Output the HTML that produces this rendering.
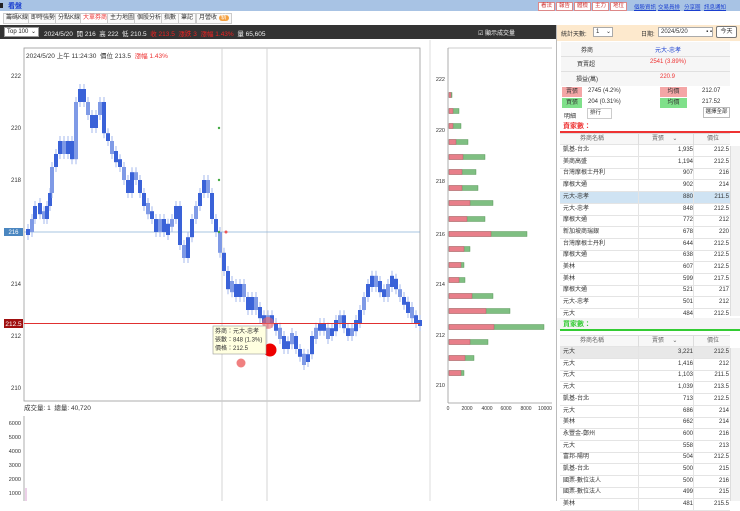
<!DOCTYPE html>
<html><head><meta charset="utf-8">
<style>
*{margin:0;padding:0;box-sizing:border-box}
body{width:740px;height:501px;overflow:hidden;background:#fff;font-family:"Liberation Sans","Noto Sans CJK TC",sans-serif;font-size:6.5px;color:#333;position:relative}
.a{position:absolute;white-space:nowrap}
.tab{position:absolute;top:13px;height:11px;border:1px solid #ccc;background:#fafafa;font-size:6px;line-height:9px;padding:0 2px;color:#333}
.btn{position:absolute;top:2px;height:9px;background:#fff;border:1px solid #d88;color:#c33;font-size:5.5px;line-height:7px;padding:0 2px}
.lnk{color:#1a3fd0;text-decoration:underline;font-size:5.5px}
.row{position:absolute;left:560px;width:170px;height:12px;border-bottom:1px solid #e4e4e4;font-size:6px;line-height:11px}
.row span{position:absolute}
.z{z-index:5}
</style></head><body>
<div class="a" style="left:0;top:0;width:740px;height:11px;background:#a8c3e4"></div>
<div class="a" style="left:0;top:3px;width:3px;height:5px;background:#222"></div>
<div class="a" style="left:8px;top:1px;font-size:7px;font-weight:bold;color:#1a3fd0">看盤</div>
<div class="btn" style="left:538px">看法</div><div class="btn" style="left:556px">報告</div><div class="btn" style="left:574px">體檢</div><div class="btn" style="left:592px">主力</div><div class="btn" style="left:610px">地位</div>
<div class="a lnk" style="left:634px;top:3px">個股資訊</div><div class="a lnk" style="left:658px;top:3px">交易員排</div><div class="a lnk" style="left:684px;top:3px">分享圈</div><div class="a lnk" style="left:704px;top:3px">訊息通知</div>
<div class="tab" style="left:3px">籌碼K線</div><div class="tab" style="left:28px">即時強勢</div><div class="tab" style="left:55px">分點K線</div><div class="tab" style="left:80px;color:#e33;background:#fff">大單券商</div><div class="tab" style="left:107px">主力地圖</div><div class="tab" style="left:134px">個股分析</div><div class="tab" style="left:161px">指數</div><div class="tab" style="left:178px">筆記</div><div class="tab" style="left:196px">月營收 <span style="background:#f4a040;color:#fff;border-radius:4px;padding:0 2px">新</span></div>
<div class="a" style="left:0;top:25px;width:556px;height:14px;background:#333"></div>
<div class="a" style="left:4px;top:27px;width:35px;height:10px;background:#fff;border:1px solid #999;font-size:6px;line-height:8px;padding-left:2px;color:#222">Top 100 <span style="float:right;padding-right:2px">⌄</span></div>
<div class="a" style="left:44px;top:28px;font-size:6.5px;color:#eee">2024/5/20 &nbsp;開 216 &nbsp;高 222 &nbsp;低 210.5 &nbsp;<span style="color:#e22">收 213.5 &nbsp;漲跌 3 &nbsp;漲幅 1.43%</span> &nbsp;量 65,605</div>
<div class="a" style="left:478px;top:28px;font-size:6px;color:#eee">☑ 顯示成交量</div>
<svg class="a" style="left:0;top:38px" width="557" height="463" viewBox="0 38 557 463" id="ch">
<rect x="24" y="48" width="396" height="353" fill="#fff" stroke="#999" stroke-width="0.8"/>
<line x1="222" y1="48" x2="222" y2="501" stroke="#ccc" stroke-width="0.8"/>
<line x1="267" y1="48" x2="267" y2="501" stroke="#ccc" stroke-width="0.8"/>
<line x1="24" y1="232" x2="420" y2="232" stroke="#8ab0d8" stroke-width="0.8"/>
<line x1="430" y1="40" x2="430" y2="501" stroke="#ddd" stroke-width="1"/>
<g font-size="6" fill="#333" text-anchor="end" font-family="Liberation Sans">
<text x="21" y="78">222</text><text x="21" y="130">220</text><text x="21" y="182">218</text><text x="21" y="286">214</text><text x="21" y="338">212</text><text x="21" y="390">210</text>
</g>
<rect x="4" y="228" width="19" height="8" fill="#4a86c0"/><text x="13.5" y="234" font-size="6" fill="#fff" text-anchor="middle">216</text>
<g id="bars"></g>
<line x1="24" y1="323.5" x2="420" y2="323.5" stroke="#e03030" stroke-width="1"/>
<rect x="4" y="319" width="19" height="9" fill="#a01010"/><text x="13.5" y="326" font-size="6.5" fill="#fff" text-anchor="middle">212.5</text>
<circle cx="219" cy="128" r="1.2" fill="#4a4"/><circle cx="219" cy="180" r="1.2" fill="#4a4"/><circle cx="219" cy="232" r="1.2" fill="#4a4"/><circle cx="226" cy="232" r="1.5" fill="#e55"/>
<circle cx="268" cy="323" r="6" fill="#e66" opacity="0.6"/>
<circle cx="270" cy="350" r="6.5" fill="#e00"/>
<circle cx="241" cy="363" r="4.5" fill="#f08080"/>
<rect x="213" y="326" width="53" height="28" fill="#ffffe0" stroke="#999" stroke-width="0.6"/>
<g font-size="6" fill="#333"><text x="215" y="333">券商：元大-忠孝</text><text x="215" y="341.5">張數：848 (1.3%)</text><text x="215" y="350">價格：212.5</text></g>
<text x="26" y="58" font-size="6.5" fill="#333">2024/5/20 上午 11:24:30 &#160;價位 213.5 &#160;<tspan fill="#e33">漲幅 1.43%</tspan></text>
<line x1="448" y1="48" x2="448" y2="403" stroke="#999" stroke-width="0.8"/><line x1="448" y1="403" x2="552" y2="403" stroke="#999" stroke-width="0.8"/><line x1="448" y1="48" x2="552" y2="48" stroke="#999" stroke-width="0.6"/>
<g font-size="5.5" fill="#333" text-anchor="end"><text x="445" y="81">222</text><text x="445" y="132">220</text><text x="445" y="183">218</text><text x="445" y="236">216</text><text x="445" y="286">214</text><text x="445" y="337">212</text><text x="445" y="387">210</text></g>
<g font-size="5" fill="#333" text-anchor="middle"><text x="448" y="410">0</text><text x="467" y="410">2000</text><text x="487" y="410">4000</text><text x="506" y="410">6000</text><text x="526" y="410">8000</text><text x="545" y="410">10000</text></g>
<g id="side"></g>
<text x="24" y="410" font-size="6.5" fill="#333">成交量: 1 &#160;總量: 40,720</text>
<line x1="24" y1="416" x2="24" y2="501" stroke="#999" stroke-width="0.8"/>
<g font-size="5.5" fill="#333" text-anchor="end"><text x="21" y="425">6000</text><text x="21" y="439">5000</text><text x="21" y="453">4000</text><text x="21" y="467">3000</text><text x="21" y="481">2000</text><text x="21" y="495">1000</text></g>
<line x1="26" y1="488" x2="26" y2="501" stroke="#d9a0d0" stroke-width="1"/>
</svg>
<div class="a" style="left:556px;top:25px;width:1px;height:476px;background:#bbb"></div>
<div class="a" style="left:557px;top:25px;width:183px;height:16px;background:#fde9cd"></div>
<div class="a" style="left:561px;top:29px;font-size:6px">統計天數:</div>
<div class="a" style="left:593px;top:27px;width:20px;height:10px;background:#fff;border:1px solid #aaa;font-size:6px;line-height:8px;padding-left:2px">1 <span style="float:right;padding-right:1px">⌄</span></div>
<div class="a" style="left:641px;top:29px;font-size:6px">日期:</div>
<div class="a" style="left:658px;top:27px;width:55px;height:10px;background:#fff;border:1px solid #aaa;font-size:6px;line-height:8px;padding-left:2px">2024/5/20 <span style="float:right">▪ ▪</span></div>
<div class="a" style="left:716px;top:26px;width:21px;height:12px;background:#fff;border:1px solid #777;border-radius:2px;font-size:6px;line-height:10px;text-align:center">今天</div>
<div class="a" style="left:561px;top:42px;width:169px;height:44px;background:#f6f6f6"></div>
<div class="a" style="left:581px;top:45px;font-size:6px">券商</div><div class="a" style="left:655px;top:45px;font-size:6px;color:#1a3fd0">元大-忠孝</div>
<div class="a" style="left:561px;top:56px;width:169px;height:1px;background:#e0e0e0"></div>
<div class="a" style="left:577px;top:59px;font-size:6px">買賣超</div><div class="a" style="left:650px;top:59px;font-size:6px;color:#e33">2541 (3.89%)</div>
<div class="a" style="left:561px;top:71px;width:169px;height:1px;background:#e0e0e0"></div>
<div class="a" style="left:576px;top:74px;font-size:6px">損益(萬)</div><div class="a" style="left:660px;top:74px;font-size:6px;color:#e33">220.9</div>
<div class="a" style="left:562px;top:87px;width:20px;height:10px;background:#f4a6a6;font-size:6px;text-align:center;line-height:10px">賣張</div>
<div class="a" style="left:588px;top:88px;font-size:6px">2745 (4.2%)</div>
<div class="a" style="left:660px;top:87px;width:27px;height:10px;background:#f4a6a6;font-size:6px;text-align:center;line-height:10px">均價</div>
<div class="a" style="left:702px;top:88px;font-size:6px">212.07</div>
<div class="a" style="left:562px;top:98px;width:20px;height:10px;background:#7fe08a;font-size:6px;text-align:center;line-height:10px">買張</div>
<div class="a" style="left:588px;top:99px;font-size:6px">204 (0.31%)</div>
<div class="a" style="left:660px;top:98px;width:27px;height:10px;background:#7fe08a;font-size:6px;text-align:center;line-height:10px">均價</div>
<div class="a" style="left:702px;top:99px;font-size:6px">217.52</div>
<div class="a" style="left:564px;top:111px;font-size:6px">明細</div>
<div class="a" style="left:587px;top:108px;width:25px;height:11px;border:1px solid #ccc;font-size:5.5px;line-height:9px;padding-left:2px">排行</div>
<div class="a" style="left:703px;top:107px;width:27px;height:11px;border:1px solid #bbb;font-size:5.5px;line-height:9px;text-align:center">選擇全部</div>
<div class="a" style="left:563px;top:121px;font-size:7px;color:#e33;font-weight:bold">賣家數：</div>
<div class="a" style="left:560px;top:131px;width:180px;height:1.5px;background:#e33"></div>
<div class="a z" style="left:557px;top:318px;width:183px;height:12px;background:#f4f4f4"></div>
<div class="a z" style="left:563px;top:319px;font-size:7px;color:#3c3;font-weight:bold">買家數：</div>
<div class="a z" style="left:560px;top:329px;width:180px;height:1.5px;background:#3c3"></div>
<div class="a" style="left:730px;top:146px;width:10px;height:170px;background:#f2f2f2;border-left:1px solid #ddd"></div>
<div class="a" style="left:730px;top:348px;width:10px;height:153px;background:#f2f2f2;border-left:1px solid #ddd"></div>
<div id="tbl"></div>
<script>
var NS="http://www.w3.org/2000/svg";
function el(p,t,a){var e=document.createElementNS(NS,t);for(var k in a)e.setAttribute(k,a[k]);p.appendChild(e);return e}
var py=function(p){return 76+(222-p)*26};
var d=[26,216,30,216.5,33,217,38,216.8,42,216.5,45,217,48,217.5,50,218.5,54,219,58,219.5,62,219,66,219.5,70,218.8,74,221,78,221.5,82,221,86,220.5,90,220,94,220.5,98,221,102,219.8,106,219.5,110,219,114,218.8,118,218.5,122,218,126,217.5,130,218.3,134,218,138,217.5,142,217,146,216.8,150,216.5,154,216,158,216.5,162,216,166,216.2,170,216.5,174,217,178,215.5,182,215,186,215.8,190,216.5,194,217,198,217.5,202,218,206,217.5,210,216.5,214,216,218,215.2,222,214.5,226,213.8,230,214,234,213.5,238,214,242,213.5,246,213,250,213.5,254,213,258,212.8,262,212.5,266,212.8,270,212.5,274,212.2,278,212,282,211.5,286,211.8,290,212,294,211.5,298,211.2,302,211,306,211.3,310,212,314,212.2,318,212.5,322,212.2,326,212,330,212.3,334,212.5,338,212.8,342,212.3,346,212,350,212.3,354,212.5,358,213,362,213.5,366,214,370,214.2,374,214,378,213.8,382,213.5,386,214,390,214.2,394,213.8,398,213.5,402,213.2,406,213,410,212.8,414,212.5,418,212.5];
var g=document.getElementById('bars');var prev=216;
for(var i=0;i<d.length;i+=2){var x=d[i],p=d[i+1];var y1=py(Math.max(p,prev)),y2=py(Math.min(p,prev));if(y2-y1<6){y1-=3;y2+=3}
el(g,'line',{x1:x+2,x2:x+2,y1:y1-5,y2:y2+5,stroke:'#8fa8e8','stroke-width':0.8});
el(g,'rect',{x:x,y:y1,width:4,height:y2-y1,fill:(i/2)%3==1?'#7f9ae6':'#3a62d8'});prev=p;}
var s=document.getElementById('side');
var b=[[95,2,3],[111,4,10],[126,4,12],[142,7,19],[157,14,36],[172,13,27],[188,13,29],[203,21,44],[219,18,36],[234,42,78],[249,15,21],[265,12,15],[280,10,16],[296,23,44],[311,37,61],[327,45,95],[342,21,39],[358,16,25],[373,12,15]];
b.forEach(function(r){el(s,'rect',{x:449,y:r[0]-2.5,width:r[2],height:5,fill:'#7fbf82',stroke:'#4a8a4a','stroke-width':0.4});el(s,'rect',{x:449,y:r[0]-2.5,width:r[1],height:5,fill:'#e87f8a',stroke:'#b05060','stroke-width':0.4});});
var t=document.getElementById('tbl');
function hdr(y){t.insertAdjacentHTML('beforeend','<div class="row" style="top:'+y+'px;background:#f7f7f7;color:#666;border-top:1px solid #ddd"><span style="left:20px">券商名稱</span><span style="left:92px">賣張 &nbsp;&nbsp;&nbsp;&nbsp;⌄</span><span style="left:147px">價位</span><span style="left:78px;top:0;width:1px;height:12px;background:#ddd"></span><span style="left:133px;top:0;width:1px;height:12px;background:#ddd"></span></div>')}
function rows(y,data,hl){data.forEach(function(r,i){t.insertAdjacentHTML('beforeend','<div class="row" style="top:'+(y+i*11.7)+'px;'+(i==hl?'background:#cfe3f3;':(hl<0&&i==0?'background:#e8e8e8;':''))+'"><span style="left:3px">'+r[0]+'</span><span style="right:37px">'+r[1]+'</span><span style="right:1px">'+r[2]+'</span><span style="left:78px;top:0;width:1px;height:12px;background:#e4e4e4"></span><span style="left:133px;top:0;width:1px;height:12px;background:#e4e4e4"></span></div>')})}
hdr(133);
rows(145,[["凱基-台北","1,935","212.5"],["美商高盛","1,194","212.5"],["台灣摩根士丹利","907","216"],["摩根大通","902","214"],["元大-忠孝","880","211.5"],["元大-忠孝","848","212.5"],["摩根大通","772","212"],["新加坡商瑞銀","678","220"],["台灣摩根士丹利","644","212.5"],["摩根大通","638","212.5"],["美林","607","212.5"],["美林","599","217.5"],["摩根大通","521","217"],["元大-忠孝","501","212"],["元大","484","212.5"]],4);
hdr(335);
rows(347,[["元大","3,221","212.5"],["元大","1,416","212"],["元大","1,103","211.5"],["元大","1,039","213.5"],["凱基-台北","713","212.5"],["元大","686","214"],["美林","662","214"],["永豐金-鄭州","600","216"],["元大","558","213"],["富邦-陽明","504","212.5"],["凱基-台北","500","215"],["國票-數位法人","500","216"],["國票-數位法人","499","215"],["美林","481","215.5"]],-1);
</script>
</body></html>
